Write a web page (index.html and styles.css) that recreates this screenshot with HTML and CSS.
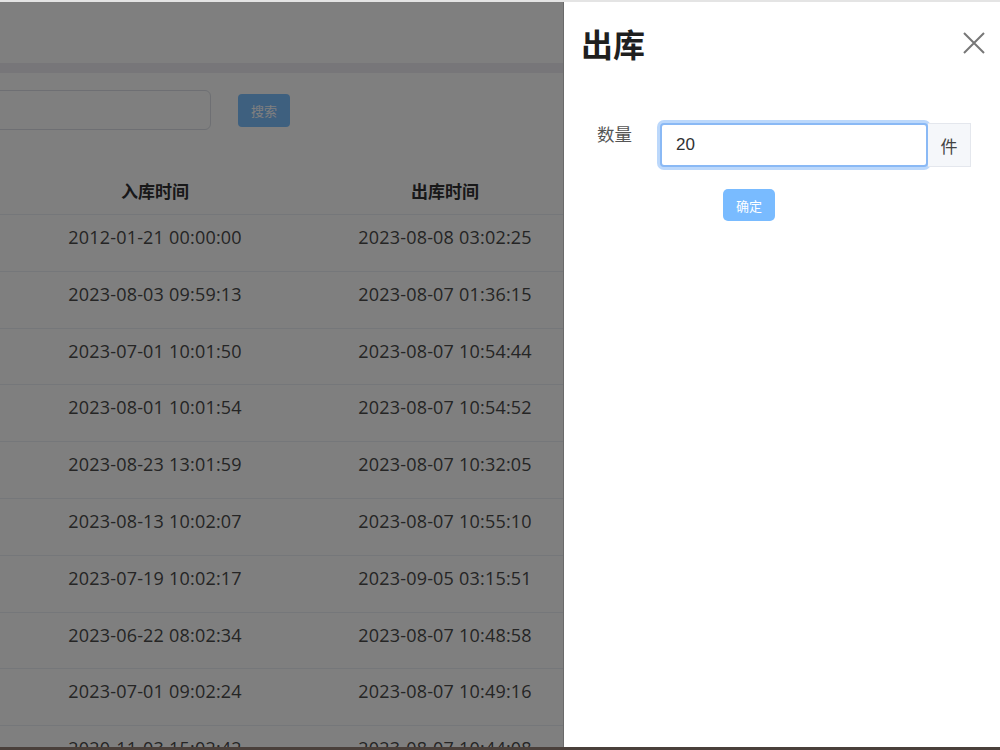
FILE: index.html
```html
<!DOCTYPE html>
<html lang="zh">
<head>
    <meta charset="UTF-8">
    <title>出库</title>
    <link rel="stylesheet" href="styles.css">
</head>
<body>
    <div class="page">
        <div class="header"></div>
        <div class="band"></div>

        <!-- search bar -->
        <div class="toolbar">
            <input class="search-input" type="text">
            <button class="search-btn">搜索</button>
        </div>

        <!-- stock list -->
        <table class="stock-table">
            <thead>
                <tr><th>入库时间</th><th>出库时间</th><th></th></tr>
            </thead>
            <tbody>
                <tr><td>2012-01-21 00:00:00</td><td>2023-08-08 03:02:25</td><td></td></tr>
                <tr><td>2023-08-03 09:59:13</td><td>2023-08-07 01:36:15</td><td></td></tr>
                <tr><td>2023-07-01 10:01:50</td><td>2023-08-07 10:54:44</td><td></td></tr>
                <tr><td>2023-08-01 10:01:54</td><td>2023-08-07 10:54:52</td><td></td></tr>
                <tr><td>2023-08-23 13:01:59</td><td>2023-08-07 10:32:05</td><td></td></tr>
                <tr><td>2023-08-13 10:02:07</td><td>2023-08-07 10:55:10</td><td></td></tr>
                <tr><td>2023-07-19 10:02:17</td><td>2023-09-05 03:15:51</td><td></td></tr>
                <tr><td>2023-06-22 08:02:34</td><td>2023-08-07 10:48:58</td><td></td></tr>
                <tr><td>2023-07-01 09:02:24</td><td>2023-08-07 10:49:16</td><td></td></tr>
                <tr><td>2020-11-03 15:02:42</td><td>2023-08-07 10:44:08</td><td></td></tr>
            </tbody>
        </table>
    </div>

    <div class="mask"></div>

    <!-- 出库 drawer -->
    <div class="drawer">
        <div class="drawer-header">
            <h2 class="drawer-title">出库</h2>
            <span class="drawer-close">
                <svg width="22" height="22" viewBox="0 0 22 22">
                    <path d="M1 1 L21 21 M21 1 L1 21" stroke="#777" stroke-width="2" fill="none"/>
                </svg>
            </span>
        </div>
        <div class="drawer-body">
            <div class="form-item">
                <label class="form-label">数量</label>
                <div class="input-group">
                    <input class="qty-input" type="text" value="20">
                    <span class="input-append">件</span>
                </div>
            </div>
            <button class="confirm-btn">确定</button>
        </div>
    </div>

    <div class="window-edge"></div>
</body>
</html>
```

FILE: styles.css
```css
body {
    margin: 0;
    height: 750px;
    overflow: hidden;
    border-top: 2px solid #e4e4e4;
    box-sizing: border-box;
    background-color: #ffffff;
    font-family: "Open Sans", "Noto Sans CJK SC", sans-serif;
    color: #606266;
}

.header {
    height: 61px;
    background-color: #ffffff;
}

.band {
    height: 10px;
    background-color: #eeedf2;
}

.toolbar {
    display: flex;
    align-items: flex-start;
    gap: 27px;
    padding-top: 17px;
    height: 76px;
}

.search-input {
    width: 300px;
    height: 40px;
    margin-left: -89px;
    box-sizing: border-box;
    border: 1px solid #dcdfe6;
    border-radius: 6px;
}

.search-btn {
    margin-top: 4px;
    width: 52px;
    height: 33px;
    border: none;
    border-radius: 4px;
    background-color: #7cc0ff;
    color: #ffffff;
    font-size: 13px;
    font-family: "Noto Sans CJK SC", sans-serif;
}

.stock-table {
    border-collapse: collapse;
    width: 900px;
    table-layout: fixed;
}

.stock-table th:nth-child(1),
.stock-table td:nth-child(1) {
    width: 310px;
}

.stock-table th:nth-child(2),
.stock-table td:nth-child(2) {
    width: 270px;
}

.stock-table th {
    height: 48px;
    padding: 0;
    border-bottom: 1px solid #ebeef5;
    font-size: 17px;
    font-weight: bold;
    color: #303133;
    font-family: "Noto Sans CJK SC", sans-serif;
}

.stock-table td {
    height: 56.8px;
    box-sizing: border-box;
    padding: 10px 0 0;
    vertical-align: top;
    text-align: center;
    border-bottom: 1px solid #ebeef5;
    font-size: 18px;
    letter-spacing: 0.2px;
    color: #4a4a4a;
}

.mask {
    position: fixed;
    top: 2px;
    left: 0;
    right: 0;
    bottom: 0;
    background-color: rgba(0, 0, 0, 0.5);
}

.drawer {
    position: fixed;
    top: 2px;
    right: 0;
    bottom: 3px;
    width: 436px;
    background-color: #ffffff;
    border-left: 1px solid #6a6a6a;
}

.drawer-header {
    display: flex;
    justify-content: space-between;
    align-items: center;
    padding: 20px 15px 0 17px;
}

.drawer-title {
    margin: 0;
    font-size: 32px;
    font-weight: bold;
    color: #1f1f1f;
    font-family: "Noto Sans CJK SC", sans-serif;
    line-height: 42px;
}

.drawer-close {
    display: flex;
}

.drawer-body {
    padding: 59px 0 0 33px;
}

.form-item {
    display: flex;
    align-items: flex-start;
}

.form-label {
    width: 63px;
    font-size: 17.5px;
    line-height: 22px;
    color: #555;
    font-family: "Noto Sans CJK SC", sans-serif;
}

.input-group {
    display: flex;
    height: 44px;
}

.qty-input {
    width: 268px;
    box-sizing: border-box;
    border: 2px solid #8ab9f5;
    border-radius: 4px;
    box-shadow: 0 0 0 3px #bcd8fb;
    padding: 0 14px;
    font-size: 17px;
    font-family: "Liberation Sans", Arial, sans-serif;
    color: #303133;
    outline: none;
}

.input-append {
    width: 43px;
    box-sizing: border-box;
    display: flex;
    align-items: center;
    justify-content: center;
    background-color: #f5f7fa;
    border: 1px solid #e4e7ed;
    border-left: none;
    font-size: 17px;
    color: #444;
    font-family: "Noto Sans CJK SC", sans-serif;
}

.confirm-btn {
    margin: 22px 0 0 126px;
    width: 52px;
    height: 32px;
    border: none;
    border-radius: 5px;
    background-color: #79bbff;
    color: #ffffff;
    font-size: 13px;
    font-family: "Noto Sans CJK SC", sans-serif;
}

.window-edge {
    position: fixed;
    left: 0;
    right: 0;
    bottom: 0;
    height: 3px;
    background-color: #4a403b;
}
```
